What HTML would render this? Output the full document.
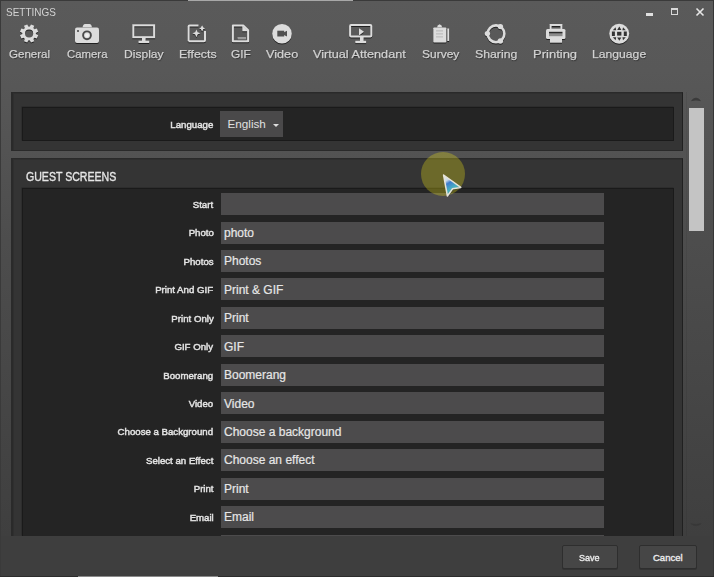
<!DOCTYPE html>
<html><head><meta charset="utf-8">
<style>
*{margin:0;padding:0;box-sizing:border-box}
html,body{width:714px;height:577px;overflow:hidden}
body{position:relative;font-family:"Liberation Sans",sans-serif;background:linear-gradient(#5a5a5a 0px,#585858 70px,#535353 150px,#4d4d4d 240px,#464646 390px,#3f3f3f 536px,#3e3e3e 577px)}
.abs{position:absolute}
#frameL{left:0;top:0;width:1px;height:577px;background:#3a3a3a}
#frameR{right:0;top:0;width:1px;height:577px;background:#363636}
#frameT{left:0;top:0;width:714px;height:1px;background:#3a3a3a}
#frameT2{left:188px;top:0;width:165px;height:1px;background:#a8a8a8}
#frameB{left:0;top:576px;width:714px;height:1px;background:#2c2c2c}
#frameB2{left:78px;top:576px;width:140px;height:1px;background:#8a8a8a}
.title{left:6.3px;top:5.4px;font-size:11.6px;color:#d2d2d2;transform-origin:0 0;transform:scaleX(0.86);white-space:nowrap}
.tb{position:absolute;top:47.6px;transform-origin:0 0;font-size:11.5px;color:#d2d2d2;white-space:nowrap;-webkit-text-stroke:0.25px #d2d2d2;text-shadow:0.5px 1px 1px #2a2a2a}
#icons{filter:drop-shadow(0.3px 1.2px 0.7px rgba(10,10,10,0.7))}
.panel{position:absolute;background:#343434;border:1px solid #2a2a2a;border-left-width:2px;border-right-color:#202020;box-shadow:inset 1px 1px 0 #2f2f2f}
.inner{position:absolute;background:#242424;border:1px solid #1a1a1a;box-shadow:-0.5px -0.5px 0 #262626}
.lbl{position:absolute;right:500.6px;font-size:9.5px;color:#e4e4e4;-webkit-text-stroke:0.45px #e4e4e4;white-space:nowrap;transform-origin:100% 50%;transform:scaleX(1.015)}
.inp{position:absolute;left:221px;width:383px;height:22px;background:#4c4b4c}
.inp span{position:absolute;left:3px;top:4.2px;font-size:12px;color:#e6e6e6;white-space:nowrap;-webkit-text-stroke:0.2px #e6e6e6}
.btn{position:absolute;top:545px;height:24px;background:#464646;border:1px solid #2e2e2e;border-radius:2px;box-shadow:0 1px 0 #333}
.btn span{position:absolute;top:5.8px;font-size:9.5px;color:#ececec;-webkit-text-stroke:0.35px #ececec}
</style></head><body>
<div class="abs" id="frameT"></div>
<div class="abs" id="frameT2"></div>
<div class="abs" id="frameL"></div>
<div class="abs" id="frameR"></div>

<div class="abs title">SETTINGS</div>

<!-- window controls -->
<div class="abs" style="left:646px;top:13px;width:7px;height:3px;background:#e0e0e0"></div>
<div class="abs" style="left:671px;top:8px;width:7px;height:7px;border:1px solid #d8d8d8;border-top-width:2px"></div>
<svg class="abs" style="left:695px;top:7px" width="10" height="10" viewBox="0 0 10 10"><path d="M1.5 1.5L8.5 8.5M8.5 1.5L1.5 8.5" stroke="#e6e6e6" stroke-width="1.6"/></svg>

<!-- toolbar -->
<div id="toolbar"><svg class="abs" id="icons" style="left:0;top:0" width="714" height="50" viewBox="0 0 714 50">
<g fill="#dcdcdc" stroke="none">
<path fill-rule="evenodd" d="M35.77 34.12 L38.21 35.37 L36.87 38.62 L34.26 37.78 L33.98 38.38 L33.38 38.66 L34.22 41.27 L30.97 42.61 L29.72 40.17 L29.10 40.40 L28.48 40.17 L27.23 42.61 L23.98 41.27 L24.82 38.66 L24.22 38.38 L23.94 37.78 L21.33 38.62 L19.99 35.37 L22.43 34.12 L22.20 33.50 L22.43 32.88 L19.99 31.63 L21.33 28.38 L23.94 29.22 L24.22 28.62 L24.82 28.34 L23.98 25.73 L27.23 24.39 L28.48 26.83 L29.10 26.60 L29.72 26.83 L30.97 24.39 L34.22 25.73 L33.38 28.34 L33.98 28.62 L34.26 29.22 L36.87 28.38 L38.21 31.63 L35.77 32.88 L36.00 33.50Z M33.2 33.5 A4.1 4.1 0 1 0 25.0 33.5 A4.1 4.1 0 1 0 33.2 33.5Z"/>
<!-- camera -->
<path d="M82.5 27.5 Q83 24 85 24 L89.5 24 Q91.5 24 92 27.5 Z"/>
<rect x="75" y="27.5" width="24" height="15.5" rx="2"/>
</g>
<circle cx="87" cy="35.3" r="3.9" fill="none" stroke="#4a4a4a" stroke-width="1.9"/>
<circle cx="87" cy="35.3" r="1.9" fill="#f0f0f0"/>
<rect x="77" y="30" width="2" height="2" fill="#666"/>
<!-- display -->
<g fill="none" stroke="#dcdcdc" stroke-width="2.0">
<rect x="133.3" y="25.3" width="20.8" height="11.9"/>
<rect x="350.1" y="25.1" width="21.2" height="11.4" rx="1"/>
<path d="M188.6 41.3 V26.4 Q188.6 25.4 189.6 25.4 H198.5 M205 31 V40.3 Q205 41.3 204 41.3 H188.6"/>
<path d="M232.9 41.3 V25.4 H243.2 L248.1 30.3 V41.3 Z" stroke-linejoin="round"/>

<rect x="550.6" y="25" width="10.8" height="4.6"/>
</g>
<g fill="#dcdcdc">
<rect x="142" y="37.5" width="3.6" height="3.5"/>
<rect x="138.5" y="40.7" width="10.7" height="2.3"/>
<rect x="360" y="36.5" width="3.6" height="4.5"/>
<rect x="355.3" y="40.8" width="10.8" height="2.3"/>
<path d="M359 28.2 L364 31.8 L359 35.4Z"/>
<path d="M196.4 29.5 L197.6 32.2 L200.4 33.3 L197.6 34.4 L196.4 37.2 L195.2 34.4 L192.4 33.3 L195.2 32.2Z"/>
<path d="M202.1 25.6 L203 27.5 L204.9 28.4 L203 29.3 L202.1 31.2 L201.2 29.3 L199.3 28.4 L201.2 27.5Z"/>
<circle cx="282" cy="33.7" r="9.8"/>
<path d="M437 27.4 Q437 25 439.6 24.2 Q442.2 25 442.2 27.4Z"/>
<rect x="433.3" y="27.4" width="13" height="15.1" rx="0.8"/>
<rect x="447.3" y="28.5" width="1.8" height="12.5"/>
<circle cx="496" cy="33.8" r="8.4" fill="none" stroke="#dcdcdc" stroke-width="2.6"/>
<circle cx="487.4" cy="33.6" r="2.7"/>
<circle cx="500.4" cy="26.6" r="2.7"/>
<circle cx="500.4" cy="41" r="2.7"/>
<rect x="546" y="29" width="19.5" height="10" rx="1.5"/>
<rect x="550" y="38.5" width="12" height="4.2"/>
<circle cx="619.2" cy="33.8" r="10"/>
</g>
<g fill="#4f4f4f">
<rect x="277.3" y="30.7" width="6.9" height="5.8"/>
<path d="M284 32.3 L287 30.8 V36.4 L284 34.9Z"/>
<rect x="436" y="30.5" width="7" height="0.8" fill="#acacac"/>
<rect x="436" y="33.5" width="7" height="0.8" fill="#acacac"/>
<rect x="436" y="36.5" width="7" height="0.8" fill="#acacac"/>
<rect x="549" y="31.8" width="13.5" height="1.8" fill="#2a2a2a"/>
<rect x="549" y="34" width="13.5" height="2.2" fill="#8c8c8c"/>
<path d="M242.3 25.4 V31.2 H248.1Z" fill="#dcdcdc"/>
<rect x="237.5" y="37" width="8.5" height="2.6" fill="#9a9a9a"/>
<g fill="#333333">
<rect x="611.9" y="31.5" width="3" height="4.5"/>
<rect x="617.1" y="31.8" width="4.3" height="3.8"/>
<rect x="623.8" y="31.5" width="3" height="4.5"/>
<path d="M617.2 30 L619.3 26.6 L621.4 30Z"/>
<path d="M617.2 37.4 L619.3 40.8 L621.4 37.4Z"/>
<path d="M612.8 30.2 L615.6 27.3 L616.2 30.2Z"/>
<path d="M625.8 30.2 L623 27.3 L622.4 30.2Z"/>
<path d="M612.8 37.3 L615.6 40.2 L616.2 37.3Z"/>
<path d="M625.8 37.3 L623 40.2 L622.4 37.3Z"/>
</g>
</g>

<path d="M202.1 25.6 L203 27.5 L204.9 28.4 L203 29.3 L202.1 31.2 L201.2 29.3 L199.3 28.4 L201.2 27.5Z" fill="#dcdcdc"/>
</svg><!--/icons-->
<div class="tb" style="left:9.12px;transform:scaleX(1.0050)">General</div>
<div class="tb" style="left:66.66px;transform:scaleX(0.9890)">Camera</div>
<div class="tb" style="left:123.81px;transform:scaleX(1.0501)">Display</div>
<div class="tb" style="left:178.81px;transform:scaleX(1.0789)">Effects</div>
<div class="tb" style="left:230.87px;transform:scaleX(1.0310)">GIF</div>
<div class="tb" style="left:265.58px;transform:scaleX(1.1027)">Video</div>
<div class="tb" style="left:313.36px;transform:scaleX(1.1019)">Virtual Attendant</div>
<div class="tb" style="left:422.33px;transform:scaleX(1.0421)">Survey</div>
<div class="tb" style="left:475.02px;transform:scaleX(1.0687)">Sharing</div>
<div class="tb" style="left:532.68px;transform:scaleX(1.1312)">Printing</div>
<div class="tb" style="left:591.62px;transform:scaleX(1.0584)">Language</div></div><!--/toolbar-->

<!-- panel 1 -->
<div class="panel" style="left:11px;top:92px;width:672px;height:58.5px"></div>
<div class="inner" style="left:22px;top:107px;width:651.5px;height:33.5px"></div>
<div class="lbl" style="top:119px">Language</div>
<div class="abs" style="left:220px;top:111px;width:63px;height:26px;background:#4a494a"></div>
<div class="abs" style="left:227.5px;top:116.7px;font-size:11.7px;color:#e0e0e0">English</div>
<div class="abs" style="left:273px;top:124px;width:0;height:0;border-left:3px solid transparent;border-right:3px solid transparent;border-top:3px solid #dedede"></div>

<!-- panel 2 -->
<div class="panel" style="left:11px;top:158px;width:672px;height:378px;border-bottom:none"></div>
<div class="abs" style="left:26.3px;top:169.6px;font-size:12.3px;color:#e6e6e6;transform-origin:0 0;transform:scaleX(0.86);white-space:nowrap;-webkit-text-stroke:0.35px #e6e6e6">GUEST SCREENS</div>
<div class="inner" style="left:22px;top:188px;width:651.5px;height:348px;border-bottom:none"></div>

<div id="rows"><div class="inp" style="top:193.0px"></div>
<div class="lbl" style="top:198.6px">Start</div>
<div class="inp" style="top:221.5px"><span>photo</span></div>
<div class="lbl" style="top:227.1px">Photo</div>
<div class="inp" style="top:250.0px"><span>Photos</span></div>
<div class="lbl" style="top:255.6px">Photos</div>
<div class="inp" style="top:278.4px"><span>Print &amp; GIF</span></div>
<div class="lbl" style="top:284.0px">Print And GIF</div>
<div class="inp" style="top:306.9px"><span>Print</span></div>
<div class="lbl" style="top:312.5px">Print Only</div>
<div class="inp" style="top:335.4px"><span>GIF</span></div>
<div class="lbl" style="top:341.0px">GIF Only</div>
<div class="inp" style="top:363.9px"><span>Boomerang</span></div>
<div class="lbl" style="top:369.5px">Boomerang</div>
<div class="inp" style="top:392.4px"><span>Video</span></div>
<div class="lbl" style="top:398.0px">Video</div>
<div class="inp" style="top:420.8px"><span>Choose a background</span></div>
<div class="lbl" style="top:426.4px">Choose a Background</div>
<div class="inp" style="top:449.3px"><span>Choose an effect</span></div>
<div class="lbl" style="top:454.9px">Select an Effect</div>
<div class="inp" style="top:477.8px"><span>Print</span></div>
<div class="lbl" style="top:483.4px">Print</div>
<div class="inp" style="top:506.3px"><span>Email</span></div>
<div class="lbl" style="top:511.9px">Email</div>
<div class="inp" style="top:534.8px"></div></div><!--/rows-->

<!-- cursor -->
<div class="abs" style="left:421.2px;top:152px;width:44px;height:44px;border-radius:50%;background:rgba(240,228,20,0.3)"></div>
<svg class="abs" style="left:0;top:0" width="714" height="577" viewBox="0 0 714 577">
<defs><linearGradient id="cg" x1="0" y1="0" x2="0.5" y2="1"><stop offset="0" stop-color="#f4f4ec"/><stop offset="0.28" stop-color="#c8d8e8"/><stop offset="0.42" stop-color="#3f7ccc"/><stop offset="0.7" stop-color="#48b0c0"/><stop offset="1" stop-color="#5a9080"/></linearGradient></defs>
<path d="M444.6 176.6 L459.6 187.2 L452.3 188.6 L447.6 195" fill="none" stroke="#1e2a30" stroke-width="1.2" stroke-opacity="0.5" transform="translate(0.8,0.8)"/>
<path d="M443.6 175 L460.8 187.4 L452.6 188.8 L447.4 196 Z" fill="url(#cg)" stroke="#e6e4d8" stroke-width="1.5" stroke-linejoin="round"/>
</svg>
<!-- scrollbar -->
<div class="abs" style="left:686px;top:92px;width:1px;height:444px;background:rgba(0,0,0,0.06)"></div>
<svg class="abs" style="left:688px;top:94px" width="16" height="8" viewBox="0 0 16 8"><path d="M3.6 6.6 Q8 1.6 12.4 6.6 Q8 5.4 3.6 6.6Z" fill="#3a3a3a" stroke="#3a3a3a" stroke-width="0.8"/></svg>
<svg class="abs" style="left:688px;top:521px" width="16" height="8" viewBox="0 0 16 8"><path d="M2.8 2.6 Q8 7 13.2 2.6 Q8 4 2.8 2.6Z" fill="#373737" stroke="#393939" stroke-width="0.5"/></svg>
<div class="abs" style="left:689px;top:108px;width:15px;height:123px;background:#c4c4c4"></div>

<!-- bottom bar -->
<div class="abs" style="left:1px;top:536px;width:711px;height:40px;background:#3e3e3e"></div>
<div class="abs" id="frameB"></div>
<div class="abs" id="frameB2"></div>
<div class="btn" style="left:562px;width:56px"><span style="left:16.3px;transform:scaleX(0.95);transform-origin:0 0">Save</span></div>
<div class="btn" style="left:639px;width:58px"><span style="left:13px">Cancel</span></div>


</body></html>
